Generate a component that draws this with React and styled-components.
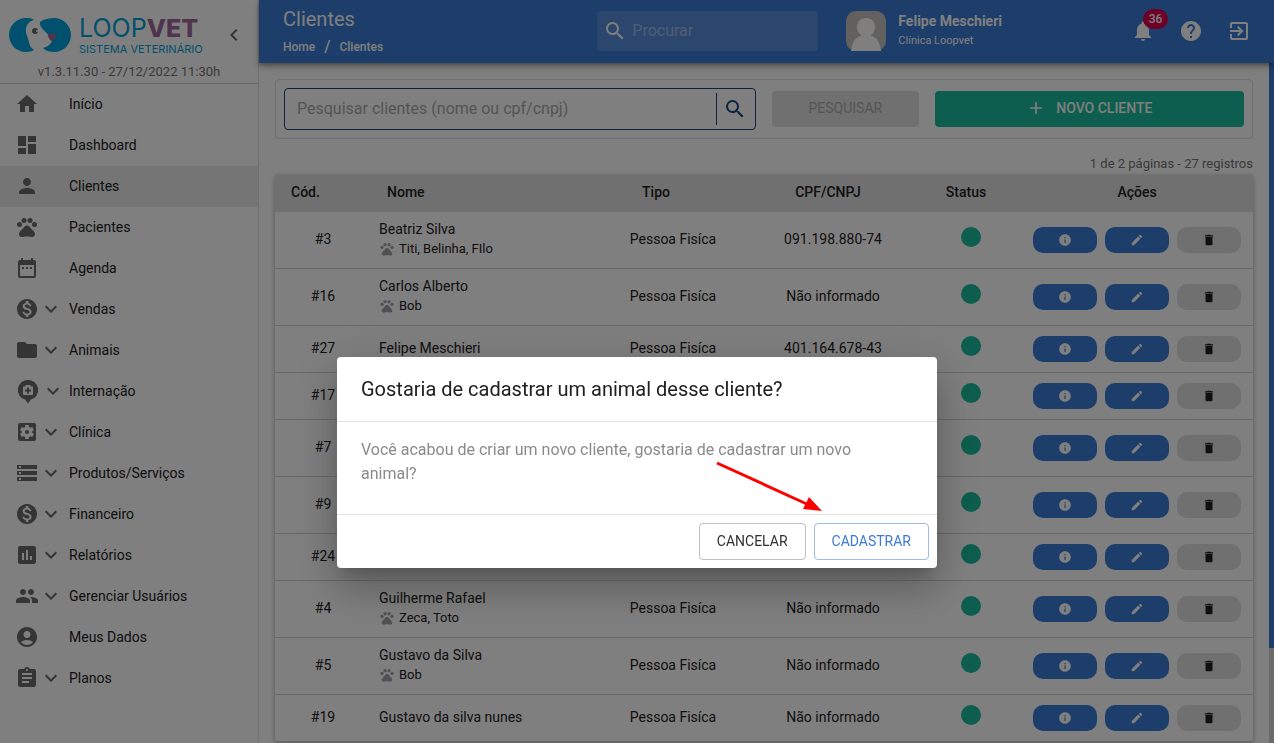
import React from "react";
import styled, { createGlobalStyle } from "styled-components";
import {
  MdHome, MdDashboard, MdPerson, MdPets, MdDateRange, MdMonetizationOn, MdFolder,
  MdSettingsApplications, MdStorage, MdAssessment, MdPeople, MdAccountCircle,
  MdAssignment, MdExpandMore, MdChevronLeft, MdSearch, MdNotifications, MdHelp,
  MdExitToApp, MdAdd, MdInfo, MdEdit, MdDelete,
} from "react-icons/md";

const color = {
  primary: "#3a7bd5",
  navy: "#1a4480",
  green: "#1abc9c",
  badge: "#dc004e",
  icon: "#6b6b6b",
  line: "#e0e0e0",
  text: "#212121",
};

const GlobalStyle = createGlobalStyle`
  *, *::before, *::after { box-sizing: border-box; }
  body {
    margin: 0;
    background: #fff;
    color: ${color.text};
    font-family: Roboto, "Liberation Sans", sans-serif;
    font-size: 14px;
    line-height: 20px;
  }
  button, input { font: inherit; }
  button { cursor: pointer; }
  svg { display: block; flex: none; }
`;

const Shell = styled.div`
  display: flex;
  height: 100vh;
  overflow: hidden;
`;

/* Sidebar */

const Sidebar = styled.aside`
  flex: none;
  width: 259px;
  border-right: 1px solid ${color.line};
`;

const SidebarTop = styled.div`
  height: 84px;
  border-bottom: 1px solid #d0d0d0;
`;

const BrandRow = styled.div`
  display: flex;
  align-items: center;
  gap: 8px;
  padding: 14px 12px 0 9px;
`;

const Brand = styled.div`
  flex: 1;
  color: #00a0dc;
  font-family: Inter, Roboto, sans-serif;
`;

const BrandName = styled.div`
  font-size: 25px;
  font-weight: 400;
  line-height: 28px;
  white-space: nowrap;
  b { color: #a0669b; font-weight: 800; }
`;

const BrandTag = styled.div`
  font-size: 11px;
  line-height: 14px;
  white-space: nowrap;
`;

const IconButton = styled.button`
  position: relative;
  padding: 0;
  border: 0;
  background: none;
  color: ${(p) => p.$color || "inherit"};
`;

const Version = styled.div`
  margin-top: 8px;
  color: #757575;
  font-size: 13px;
  line-height: 16px;
  text-align: center;
`;

const MenuItem = styled.a`
  display: flex;
  align-items: center;
  height: 41px;
  padding: 0 0 2px 15px;
  background: ${(p) => (p.$active ? "#ebebeb" : "none")};
  color: ${color.text};
  text-decoration: none;
  svg { color: ${color.icon}; }
`;

const MenuIcon = styled.span`
  display: flex;
  align-items: center;
  width: 54px;
`;

/* Top bar */

const Page = styled.div`
  flex: 1;
  min-width: 0;
  display: flex;
  flex-direction: column;
`;

const TopBar = styled.header`
  position: relative;
  display: flex;
  align-items: center;
  flex: none;
  height: 63px;
  padding-bottom: 2px;
  background: ${color.primary};
  color: #fff;
  box-shadow: 0 2px 4px rgba(0, 0, 0, 0.3), 0 4px 8px rgba(0, 0, 0, 0.2);
`;

const Heading = styled.div`
  flex: 0 0 33.333%;
  padding-left: 24px;
`;

const Title = styled.h1`
  margin: 0;
  font-size: 20px;
  font-weight: 400;
  line-height: 32px;
`;

const Crumbs = styled.nav`
  display: flex;
  align-items: center;
  gap: 9px;
  font-size: 12px;
  font-weight: 500;
  line-height: 24px;
  a { color: inherit; text-decoration: none; }
  span { font-size: 16px; }
`;

const QuickSearch = styled.label`
  display: flex;
  align-items: center;
  gap: 5px;
  width: 221px;
  height: 40px;
  padding: 0 6px;
  border-radius: 4px;
  background: rgba(255, 255, 255, 0.15);
  input {
    min-width: 0;
    flex: 1;
    padding: 0;
    border: 0;
    outline: 0;
    background: none;
    color: #fff;
    font-size: 16px;
  }
  input::placeholder { color: #fff; opacity: 0.42; }
`;

const User = styled.div`
  display: flex;
  align-items: center;
  gap: 12px;
  margin-left: 28px;
`;

const UserName = styled.div`
  font-size: 14px;
  font-weight: 700;
  line-height: 20px;
`;

const Clinic = styled.div`
  font-size: 11px;
  font-weight: 400;
  line-height: 20px;
`;

const TopActions = styled.div`
  display: flex;
  gap: 24px;
  margin-left: auto;
  padding-right: 23px;
`;

const Badge = styled.span`
  position: absolute;
  top: -10px;
  left: 12px;
  width: 25px;
  height: 20px;
  border-radius: 10px;
  background: ${color.badge};
  color: #fff;
  font-size: 12px;
  font-weight: 500;
  line-height: 20px;
`;

/* Content */

const Body = styled.div`
  display: flex;
  flex: 1;
  min-height: 0;
`;

const Content = styled.main`
  flex: 1;
  min-width: 0;
  padding: 16px;
`;

const ScrollTrack = styled.div`
  flex: none;
  width: 5px;
  background: #d6d6d6;
`;

const ScrollThumb = styled.div`
  height: 86%;
  background: ${color.primary};
`;

const FilterCard = styled.form`
  display: grid;
  grid-template-columns: 6fr 2fr 4fr;
  align-items: center;
  padding: 8px 0;
  border: 1px solid ${color.line};
  border-radius: 4px;
`;

const FilterCell = styled.div`
  padding: 0 8px;
`;

const SearchBox = styled.div`
  display: flex;
  align-items: center;
  height: 42px;
  padding: 4px 8px 4px 12px;
  border: 1px solid ${color.navy};
  border-radius: 4px;
  input {
    flex: 1;
    min-width: 0;
    padding: 0;
    border: 0;
    outline: 0;
    background: none;
    font-size: 16px;
  }
  input::placeholder { color: #a9a9a9; opacity: 1; }
  button {
    height: 32px;
    padding-left: 6px;
    border-left: 1px solid ${color.navy};
  }
`;

const FilterButton = styled.button`
  display: flex;
  align-items: center;
  justify-content: center;
  gap: 10px;
  width: 100%;
  height: 36px;
  padding: 0 0 2px;
  border: 0;
  border-radius: 4px;
  background: ${(p) => (p.$green ? color.green : color.line)};
  color: ${(p) => (p.$green ? "#fff" : "#ababab")};
  font-weight: ${(p) => (p.$green ? 500 : 400)};
`;

const PageCount = styled.div`
  margin-top: 15px;
  color: #757575;
  font-size: 13px;
  line-height: 20px;
  text-align: right;
`;

const Table = styled.table`
  width: 100%;
  table-layout: fixed;
  border-collapse: separate;
  border-spacing: 0;
  margin-top: 1px;
  border-radius: 4px;
  box-shadow: 0 1px 5px rgba(0, 0, 0, 0.35);
  text-align: center;
`;

const HeadCell = styled.th`
  height: 37px;
  padding: 0 ${(p) => p.$end || 0}px 3px ${(p) => (p.$left ? 16 : 0)}px;
  background: ${color.line};
  font-weight: 500;
  text-align: ${(p) => (p.$left ? "left" : "center")};
`;

const Cell = styled.td`
  padding: 0 ${(p) => (p.$left ? 8 : 0)}px ${(p) => (p.$flush ? 0 : 2)}px;
  border-bottom: 1px solid #d0d0d0;
  text-align: ${(p) => (p.$left ? "left" : "center")};
`;

const Row = styled.tr`
  height: ${(p) => (p.$tall ? 57 : 47)}px;
`;

const Pets = styled.div`
  display: flex;
  align-items: center;
  gap: 4px;
  font-size: 13px;
  svg { color: #a2a2a2; }
`;

const Dot = styled.span`
  display: block;
  width: 20px;
  height: 20px;
  margin: 0 auto 4px;
  border-radius: 50%;
  background: ${color.green};
`;

const Actions = styled.div`
  display: flex;
  justify-content: center;
  gap: 8px;
`;

const ActionButton = styled.button`
  display: flex;
  align-items: center;
  justify-content: center;
  width: 64px;
  height: 26px;
  border: 0;
  border-radius: 10px;
  background: ${(p) => (p.$muted ? color.line : color.primary)};
  color: ${(p) => (p.$muted ? color.text : "#fff")};
`;

/* Dialog */

const Backdrop = styled.div`
  position: fixed;
  inset: 0;
  display: flex;
  align-items: flex-start;
  justify-content: center;
  padding-top: 357px;
  background: rgba(0, 0, 0, 0.5);
`;

const Dialog = styled.section`
  position: relative;
  width: 600px;
  border-radius: 4px;
  background: #fff;
  box-shadow: 0 11px 15px -7px rgba(0, 0, 0, 0.2), 0 24px 38px 3px rgba(0, 0, 0, 0.14),
    0 9px 46px 8px rgba(0, 0, 0, 0.12);
`;

const DialogTitle = styled.h2`
  margin: 0;
  padding: 16px 24px;
  font-size: 20px;
  font-weight: 400;
  line-height: 32px;
`;

const DialogText = styled.p`
  margin: 0;
  padding: 16px 40px 28px 24px;
  border: solid ${color.line};
  border-width: 1px 0;
  color: #8a8a8a;
  font-size: 16px;
  line-height: 24px;
`;

const DialogActions = styled.div`
  display: flex;
  justify-content: flex-end;
  gap: 8px;
  padding: 8px;
`;

const OutlineButton = styled.button`
  height: 37px;
  padding: 0 17px 2px;
  border: 1px solid ${(p) => (p.$primary ? "#9cbdea" : "#c0c0c0")};
  border-radius: 4px;
  background: none;
  color: ${(p) => (p.$primary ? color.primary : "#303030")};
`;

const Arrow = styled.svg`
  position: absolute;
  top: 104px;
  left: 378px;
  pointer-events: none;
`;

const LogoMark = () => (
  <svg width="62" height="36" viewBox="0 0 62 36" aria-hidden="true">
    <path
      fill="#00a0dc"
      d="M25 3C22 1 20 1 17 1 7 1 0 9 0 18s7 17 17 17c3 0 6-1 8-2-6-4-4-8-7-14C15 12 18 4 25 3z"
    />
    <path
      fill="#00a0dc"
      d="M31 5c4-3 9-4 14-4 10 0 17 8 17 17s-7 17-17 17c-4 0-8-1-11-4 4-1 7-3 9-7l-3-5C37 14 30 11 31 5z"
    />
    <path fill="#a0669b" d="M39 18c2-2 8-2 8 1 0 2-2 5-4 5s-4-4-4-6z" />
    <circle cx="26" cy="14" r="3" fill="#6b6b6b" />
    <circle cx="28" cy="14" r="1" fill="#fff" />
  </svg>
);

const InternIcon = () => (
  <svg width="26" height="26" viewBox="0 0 26 26" fill="none" aria-hidden="true">
    <path
      fill="currentColor"
      fillRule="evenodd"
      d="M13 2a10 10 0 0 1 3 19.600l-3 3.900-3-3.900A10 10 0 0 1 13 2zM10.500 7v1.500H9a1 1 0 0 0-1 1V16a1 1 0 0 0 1 1h8a1 1 0 0 0 1-1V9.500a1 1 0 0 0-1-1h-1.500V7z"
    />
    <path stroke="currentColor" strokeWidth="2" d="M13 9.500v6M10 12.500h6" />
  </svg>
);

const Avatar = () => (
  <svg width="40" height="40" viewBox="0 0 40 40" role="img" aria-label="Felipe Meschieri">
    <rect width="40" height="40" rx="10" fill="#c4c3bf" />
    <path
      fill="#fff"
      d="M20 7c6 0 9 4 9 9 0 4-2 7-4 8v1c6 1 9 7 10 15H5c1-8 4-14 10-15v-1c-2-1-4-4-4-8 0-5 3-9 9-9z"
    />
  </svg>
);

const menu = [
  { label: "Início", icon: MdHome },
  { label: "Dashboard", icon: MdDashboard },
  { label: "Clientes", icon: MdPerson, active: true },
  { label: "Pacientes", icon: MdPets },
  { label: "Agenda", icon: MdDateRange },
  { label: "Vendas", icon: MdMonetizationOn, open: true },
  { label: "Animais", icon: MdFolder, open: true },
  { label: "Internação", icon: InternIcon, open: true },
  { label: "Clínica", icon: MdSettingsApplications, open: true },
  { label: "Produtos/Serviços", icon: MdStorage, open: true },
  { label: "Financeiro", icon: MdMonetizationOn, open: true },
  { label: "Relatórios", icon: MdAssessment, open: true },
  { label: "Gerenciar Usuários", icon: MdPeople, open: true },
  { label: "Meus Dados", icon: MdAccountCircle },
  { label: "Planos", icon: MdAssignment, open: true },
];

const person = "Pessoa Fisíca";
const noDoc = "Não informado";

const clients = [
  { id: 3, name: "Beatriz Silva", pets: "Titi, Belinha, FIlo", type: person, doc: "091.198.880-74" },
  { id: 16, name: "Carlos Alberto", pets: "Bob", type: person, doc: noDoc },
  { id: 27, name: "Felipe Meschieri", type: person, doc: "401.164.678-43" },
  { id: 17 },
  { id: 7, tall: true },
  { id: 9, tall: true },
  { id: 24 },
  { id: 4, name: "Guilherme Rafael", pets: "Zeca, Toto", type: person, doc: noDoc },
  { id: 5, name: "Gustavo da Silva", pets: "Bob", type: person, doc: noDoc },
  { id: 19, name: "Gustavo da silva nunes", type: person, doc: noDoc },
];

export default function App() {
  return (
    <>
      <GlobalStyle />
      <Shell>
        <Sidebar>
          <SidebarTop>
            <BrandRow>
              <LogoMark />
              <Brand>
                <BrandName>LOOP<b>VET</b></BrandName>
                <BrandTag>SISTEMA VETERINÁRIO</BrandTag>
              </Brand>
              <IconButton $color={color.icon} aria-label="Recolher menu">
                <MdChevronLeft size={24} />
              </IconButton>
            </BrandRow>
            <Version>v1.3.11.30 - 27/12/2022 11:30h</Version>
          </SidebarTop>
          <nav>
            {menu.map(({ label, icon: Icon, active, open }) => (
              <MenuItem key={label} href="#" $active={active}>
                <MenuIcon>
                  <Icon size={24} />
                  {open && <MdExpandMore size={24} />}
                </MenuIcon>
                {label}
              </MenuItem>
            ))}
          </nav>
        </Sidebar>

        <Page>
          <TopBar>
            <Heading>
              <Title>Clientes</Title>
              <Crumbs>
                <a href="#">Home</a>
                <span>/</span>
                <a href="#">Clientes</a>
              </Crumbs>
            </Heading>
            <QuickSearch>
              <MdSearch size={24} />
              <input placeholder="Procurar" aria-label="Procurar" />
            </QuickSearch>
            <User>
              <Avatar />
              <div>
                <UserName>Felipe Meschieri</UserName>
                <Clinic>Clínica Loopvet</Clinic>
              </div>
            </User>
            <TopActions>
              <IconButton aria-label="Notificações">
                <MdNotifications size={24} />
                <Badge>36</Badge>
              </IconButton>
              <IconButton aria-label="Ajuda"><MdHelp size={24} /></IconButton>
              <IconButton aria-label="Sair"><MdExitToApp size={24} /></IconButton>
            </TopActions>
          </TopBar>

          <Body>
            <Content>
              <FilterCard>
                <FilterCell>
                  <SearchBox>
                    <input
                      placeholder="Pesquisar clientes (nome ou cpf/cnpj)"
                      aria-label="Pesquisar clientes"
                    />
                    <IconButton type="button" $color={color.navy} aria-label="Buscar">
                      <MdSearch size={24} />
                    </IconButton>
                  </SearchBox>
                </FilterCell>
                <FilterCell>
                  <FilterButton type="submit" disabled>PESQUISAR</FilterButton>
                </FilterCell>
                <FilterCell>
                  <FilterButton type="button" $green>
                    <MdAdd size={20} />
                    NOVO CLIENTE
                  </FilterButton>
                </FilterCell>
              </FilterCard>
              <PageCount>1 de 2 páginas - 27 registros</PageCount>
              <Table>
                <colgroup>
                  <col width="96" />
                  <col />
                  <col width="144" />
                  <col width="176" />
                  <col width="100" />
                  <col width="232" />
                </colgroup>
                <thead>
                  <tr>
                    <HeadCell $left>Cód.</HeadCell>
                    <HeadCell $left>Nome</HeadCell>
                    <HeadCell $end={34}>Tipo</HeadCell>
                    <HeadCell $end={10}>CPF/CNPJ</HeadCell>
                    <HeadCell $end={10}>Status</HeadCell>
                    <HeadCell>Ações</HeadCell>
                  </tr>
                </thead>
                <tbody>
                  {clients.map((c) => (
                    <Row key={c.id} $tall={c.tall || Boolean(c.pets)}>
                      <Cell>#{c.id}</Cell>
                      <Cell $left>
                        {c.name}
                        {c.pets && (
                          <Pets>
                            <MdPets size={16} />
                            {c.pets}
                          </Pets>
                        )}
                      </Cell>
                      <Cell>{c.type}</Cell>
                      <Cell>{c.doc}</Cell>
                      <Cell><Dot /></Cell>
                      <Cell $flush>
                        <Actions>
                          <ActionButton aria-label="Detalhes"><MdInfo size={14} /></ActionButton>
                          <ActionButton aria-label="Editar"><MdEdit size={14} /></ActionButton>
                          <ActionButton $muted aria-label="Excluir"><MdDelete size={14} /></ActionButton>
                        </Actions>
                      </Cell>
                    </Row>
                  ))}
                </tbody>
              </Table>
            </Content>
            <ScrollTrack><ScrollThumb /></ScrollTrack>
          </Body>
        </Page>
      </Shell>

      <Backdrop>
        <Dialog role="dialog" aria-modal="true" aria-labelledby="dialog-title">
          <DialogTitle id="dialog-title">Gostaria de cadastrar um animal desse cliente?</DialogTitle>
          <DialogText>
            Você acabou de criar um novo cliente, gostaria de cadastrar um novo animal?
          </DialogText>
          <DialogActions>
            <OutlineButton>CANCELAR</OutlineButton>
            <OutlineButton $primary>CADASTRAR</OutlineButton>
          </DialogActions>
          <Arrow width="110" height="56" viewBox="0 0 110 56" aria-hidden="true">
            <path d="M2 2L94 44" stroke="#f00" strokeWidth="3" />
            <path d="M107 50L88 48L94 36Z" fill="#f00" />
          </Arrow>
        </Dialog>
      </Backdrop>
    </>
  );
}
